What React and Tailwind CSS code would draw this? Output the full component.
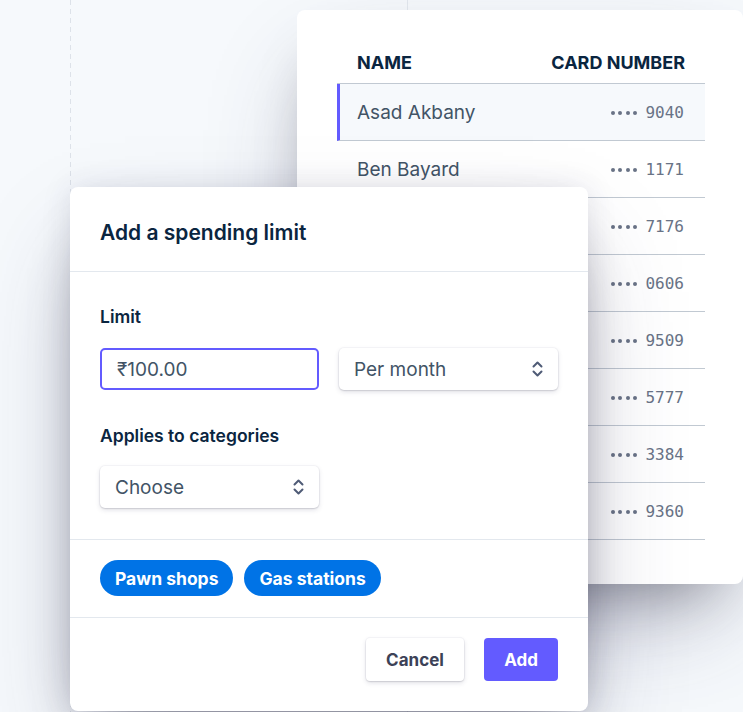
import React from "react";

const rows = [
  { name: "Asad Akbany", num: "9040", active: true },
  { name: "Ben Bayard", num: "1171" },
  { name: "Carla Diaz", num: "7176" },
  { name: "Dana Evans", num: "0606" },
  { name: "Eli Foster", num: "9509" },
  { name: "Fay Grant", num: "5777" },
  { name: "Gus Hale", num: "3384" },
  { name: "Hana Ito", num: "9360" },
];

function Chevrons() {
  return (
    <svg width="11" height="16" viewBox="0 0 11 16" fill="none" className="shrink-0">
      <path d="M1.5 5.5L5.5 1.5L9.5 5.5" stroke="#4f5b76" strokeWidth="2" strokeLinecap="round" strokeLinejoin="round" />
      <path d="M1.5 10.5L5.5 14.5L9.5 10.5" stroke="#4f5b76" strokeWidth="2" strokeLinecap="round" strokeLinejoin="round" />
    </svg>
  );
}

function Select({ label }) {
  return (
    <div className="flex h-[42px] w-[219px] items-center justify-between rounded-[5px] bg-white pl-[15px] pr-[15px] text-[19px] text-[#425466] shadow-[0_0_0_1px_rgba(50,50,93,0.04),0_2px_5px_0_rgba(50,50,93,0.14),0_1px_1.5px_0_rgba(0,0,0,0.1)]">
      <span className="pt-[3px]">{label}</span>
      <Chevrons />
    </div>
  );
}

function Dots() {
  return (
    <span className="mr-[8px] flex gap-[3.6px]">
      <span className="h-[4px] w-[4px] rounded-full bg-[#697386]" />
      <span className="h-[4px] w-[4px] rounded-full bg-[#697386]" />
      <span className="h-[4px] w-[4px] rounded-full bg-[#697386]" />
      <span className="h-[4px] w-[4px] rounded-full bg-[#697386]" />
    </span>
  );
}

export default function App() {
  return (
    <div
      className="relative h-[712px] w-[743px] overflow-hidden bg-[#f6f9fc]"
      style={{ fontFamily: "Inter, 'Noto Sans', sans-serif" }}
    >
      {/* background guide lines */}
      <div className="absolute left-[70px] top-0 h-full w-px bg-[repeating-linear-gradient(to_bottom,#dde2e9_0px,#dde2e9_5px,transparent_5px,transparent_9px)]" />
      <div className="absolute left-[407px] top-0 h-full w-px bg-[#e3e8ee]" />

      {/* table panel */}
      <div className="relative ml-[297px] mt-[10px] w-[446px] rounded-[8px] bg-white pb-[44px] pl-[40px] pr-[38px] pt-[31px] shadow-[0_50px_100px_-20px_rgba(50,50,93,0.3),0_30px_60px_-30px_rgba(0,0,0,0.4)]">
        <div className="flex h-[43px] items-center justify-between border-b border-[#c1c9d2] px-[20px] text-[18px] font-bold text-[#0a2540]">
          <span>NAME</span>
          <span>CARD NUMBER</span>
        </div>
        {rows.map((r) => (
          <div
            key={r.num}
            className={
              r.active
                ? "flex h-[57px] items-center justify-between border-b border-l-[3px] border-[#c1c9d2] border-l-[#635bff] bg-[#f6f9fc] pl-[17px] pr-[21px] pt-[2px]"
                : "flex h-[57px] items-center justify-between border-b border-[#c1c9d2] pl-[20px] pr-[21px] pt-[2px]"
            }
          >
            <span className="text-[19px] text-[#425466]">{r.name}</span>
            <span className="flex items-center">
              <Dots />
              <span
                className="text-[16px] text-[#697386]"
                style={{ fontFamily: "'DejaVu Sans Mono', monospace" }}
              >
                {r.num}
              </span>
            </span>
          </div>
        ))}
      </div>

      {/* modal */}
      <div className="absolute left-[70px] top-[187px] w-[518px] rounded-[8px] bg-white shadow-[0_50px_100px_-20px_rgba(50,50,93,0.35),0_30px_60px_-30px_rgba(0,0,0,0.45),0_0_30px_0_rgba(50,50,93,0.12)]">
        <div className="border-b border-[#e3e8ee] px-[30px] pb-[24px] pt-[32px]">
          <h2 className="text-[21px] font-semibold leading-[28px] text-[#0a2540]">
            Add a spending limit
          </h2>
        </div>
        <div className="border-b border-[#e3e8ee] px-[30px] pb-[31px] pt-[33px]">
          <div className="text-[17.5px] font-semibold leading-[24px] text-[#0a2540]">Limit</div>
          <div className="mt-[19px] flex gap-[20px]">
            <div className="flex h-[42px] w-[219px] items-center rounded-[5px] border-2 border-[#635bff] bg-white px-[15px] pt-[3px] text-[19px] text-[#425466]">
              ₹100.00
            </div>
            <Select label="Per month" />
          </div>
          <div className="mt-[34px] text-[17.5px] font-semibold leading-[24px] text-[#0a2540]">
            Applies to categories
          </div>
          <div className="mt-[18px]">
            <Select label="Choose" />
          </div>
        </div>
        <div className="flex gap-[11px] border-b border-[#e3e8ee] px-[30px] pb-[21px] pt-[20px]">
          <span className="flex h-[36px] items-center rounded-full bg-[#0073e6] px-[15px] pt-[2px] text-[17.5px] font-bold text-white">
            Pawn shops
          </span>
          <span className="flex h-[36px] items-center rounded-full bg-[#0073e6] px-[15px] pt-[2px] text-[17.5px] font-bold text-white">
            Gas stations
          </span>
        </div>
        <div className="flex justify-end gap-[20px] px-[30px] pb-[30px] pt-[20px]">
          <button className="h-[43px] w-[98px] rounded-[4px] bg-white pt-[3px] text-[17px] font-bold text-[#3c4257] shadow-[0_0_0_1px_rgba(50,50,93,0.04),0_2px_5px_0_rgba(50,50,93,0.14),0_1px_1.5px_0_rgba(0,0,0,0.1)]">
            Cancel
          </button>
          <button className="h-[43px] w-[74px] rounded-[4px] bg-[#635bff] pt-[3px] text-[17px] font-bold text-white">
            Add
          </button>
        </div>
      </div>
    </div>
  );
}
